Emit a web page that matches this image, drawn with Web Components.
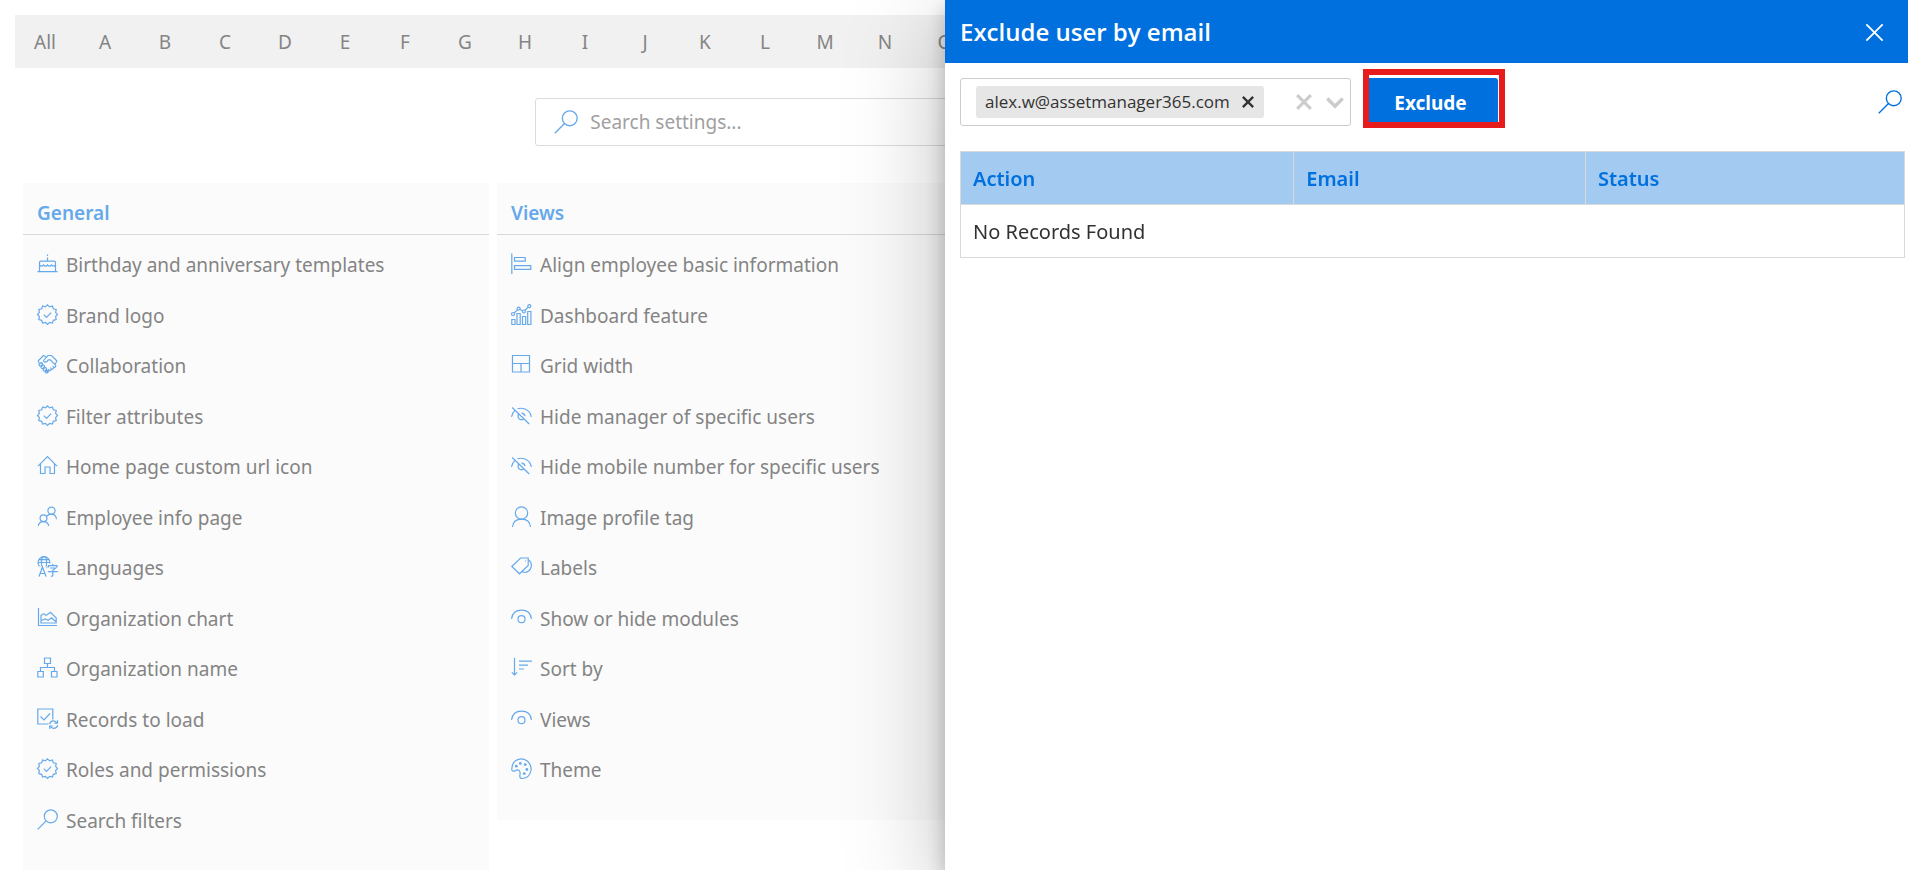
<!DOCTYPE html>
<html lang="en">
<head>
<meta charset="utf-8">
<title>Settings</title>
<style>
  html, body { margin: 0; height: 100%; }
  body {
    overflow: hidden;
    background: #fff;
    color: #848484;
    font: 19px/28px "Noto Sans", "Open Sans", sans-serif;
    --accent: #0070de;
    --accent-muted: #66a9eb;
    --line: #d9d9d9;
  }
</style>
</head>
<body>
<settings-page>
  <alphabet-bar letters="All A B C D E F G H I J K L M N O"></alphabet-bar>
  <settings-search placeholder="Search settings..."></settings-search>
  <card-grid>
    <settings-card heading="General">
      <settings-item icon="cake">Birthday and anniversary templates</settings-item>
      <settings-item icon="badge">Brand logo</settings-item>
      <settings-item icon="handshake">Collaboration</settings-item>
      <settings-item icon="badge">Filter attributes</settings-item>
      <settings-item icon="home">Home page custom url icon</settings-item>
      <settings-item icon="people">Employee info page</settings-item>
      <settings-item icon="languages">Languages</settings-item>
      <settings-item icon="areachart">Organization chart</settings-item>
      <settings-item icon="hierarchy">Organization name</settings-item>
      <settings-item icon="records">Records to load</settings-item>
      <settings-item icon="badge">Roles and permissions</settings-item>
      <settings-item icon="search">Search filters</settings-item>
    </settings-card>
    <settings-card heading="Views">
      <settings-item icon="align">Align employee basic information</settings-item>
      <settings-item icon="dashboard">Dashboard feature</settings-item>
      <settings-item icon="grid">Grid width</settings-item>
      <settings-item icon="hide">Hide manager of specific users</settings-item>
      <settings-item icon="hide">Hide mobile number for specific users</settings-item>
      <settings-item icon="person">Image profile tag</settings-item>
      <settings-item icon="labels">Labels</settings-item>
      <settings-item icon="view">Show or hide modules</settings-item>
      <settings-item icon="sort">Sort by</settings-item>
      <settings-item icon="view">Views</settings-item>
      <settings-item icon="palette">Theme</settings-item>
    </settings-card>
  </card-grid>
</settings-page>

<side-panel heading="Exclude user by email">
  <panel-toolbar>
    <email-picker value="alex.w@assetmanager365.com"></email-picker>
    <action-button highlighted>Exclude</action-button>
  </panel-toolbar>
  <records-table columns="Action,Email,Status" empty="No Records Found"></records-table>
</side-panel>

<script>
const ICONS = {
  cake: '<path d="M.5 18.700h20M2.500 18.500V9.500q0-1.300 1.300-1.300h13.400q1.300 0 1.300 1.300v9M2.500 12q2 2.400 4 0 2 2.400 4 0 2 2.400 4 0 2 2.400 4 0M10.500 8V4.500M10.500 1.500v1.500"/>',
  badge: '<path d="M10.500.8l2.100 2.100 2.800-.9.900 2.800 2.900.7-.6 2.900 1.900 2.100-1.900 2.200.6 2.900-2.900.7-.9 2.800-2.800-.8-2.100 2.100-2.100-2.100-2.800.8-.9-2.800-2.900-.7.6-2.900L.5 10.500l1.900-2.100-.6-2.900 2.900-.7.900-2.800 2.800.900z"/><path d="M6.800 10.600l2.700 2.700 4.600-4.600"/>',
  handshake: '<path d="M1 7l5.500-5.500 2.500 1.200M20 7l-5.500-5.500H11L6.800 6.200q-.5 2 1.500 2 1.500-.2 3-2.400h2l5.200 5.400q.8 1.200-.4 2-.8.4-1.700-.2.6 1.400-.6 2-.8.5-1.800-.4.4 1.600-.9 2-.8.2-1.600-.6 0 1.600-1.500 1.700L9 17.500M1 7l1.600 2.500M20 7l-2 3.200"/><path d="M2.200 10.200l1.600-1.500q1.800-.2 1.600 1.700l-1.600 1.700q-2.200 0-1.600-1.900zM4.200 12.800l1.700-1.700q1.800-.2 1.600 1.700l-1.600 1.700q-2.200 0-1.700-1.700zM6.200 15.300l1.700-1.700q1.800-.2 1.600 1.700L7.900 17q-2.200 0-1.700-1.700zM8.200 17.600l1.400-1.400q1.800 0 1.600 1.700l-1 1q-2 .3-2-1.300z"/>',
  home: '<path d="M1 11.200L10.500 1.700 20 11.200M3.500 9v9.500H8V12h5v6.500h4.500V9"/>',
  people: '<circle cx="14.500" cy="4.700" r="3.600"/><circle cx="6.500" cy="12.200" r="3.400"/><path d="M9.800 10q1.800-1.800 4.700-1.800 4.500.3 5 5M1.200 20q.8-4.400 5.300-4.400T11.800 20"/>',
  languages: '<circle cx="7" cy="6.500" r="5.900"/><ellipse cx="7" cy="6.500" rx="2.600" ry="5.900"/><path d="M1.200 6.500h11.600M2 3.700h10"/><path fill="#fbfbfb" stroke="none" d="M1.500 10.500h8v10h-8zM10.500 7.500h10v13h-10z"/><path d="M2 20.500l3.500-9.500L9 20.500M3.300 17.500h4.400M11.500 11.500V9.700h8.500v1.800M15.800 7.800v1.800M13 12h5.500l-2.700 2.200v5q0 1.300-2 1M10.800 15.700h10"/>',
  areachart: '<path d="M1.500 1v17.500H20M4 16V8.500q3-3.300 5 0L13.500 5.300 19.200 11v5zM4.200 13.500l4-1.500 3 1.200 3.300-2.400 4.500 4"/>',
  hierarchy: '<path d="M7.500 1h6v5.500h-6zM.8 14.500h5.500V20H.8zM14.500 14.500H20V20h-5.500zM10.500 6.500v4M3.500 14.300v-3.800h14v3.800"/>',
  records: '<path d="M11.500 16H.8V1h15v10.500M3.500 8.500l3.500 3.500 6-6.500"/><path d="M12.500 16q1-3.300 4-3.200 2.200.1 3.500 2.200M20.500 12.200v3h-3M20.800 17.200q-1 3-4 3.200-2.300 0-3.500-2.100M12.700 21v-3h3"/>',
  search: '<circle cx="13.800" cy="7.300" r="6.500"/><path d="M9.200 11.900L.7 20.400"/>',
  align: '<path d="M.8.500v20.500M3.500 4.500h10.700v3.700H3.500zM3.500 12.700h16.300v3.600H3.500z"/>',
  dashboard: '<path d="M.8 15.500h3.200v5H.8zM6 9.500h3.200v11H6zM11.500 12.500h3.200v8h-3.200zM16.700 7.500h3.200v13h-3.200zM3.200 9l3.200-3.200M8.800 5.200l3 1.800M13.800 6.500l3.600-3.700"/><circle cx="2" cy="10" r="1.500"/><circle cx="7.600" cy="4.600" r="1.500"/><circle cx="12.900" cy="7.500" r="1.500"/><circle cx="18.300" cy="2.200" r="1.500"/>',
  grid: '<path d="M1.500 1.500h17v16.500h-17zM1.500 9.500h17M10 9.500v8.500"/>',
  hide: '<path d="M1.200 2.500l17 16.500M.5 11.800q.6-4 3.400-6.200M6.500 3.800Q10 2.600 14 4q5.500 2.200 6.300 7.800M7.500 9.300q-1.200 2.800.8 4.600 2.200 1.500 4.500 0M10.500 8.200q2.800 0 3.600 3"/>',
  person: '<circle cx="10.500" cy="7" r="6.200"/><path d="M1.500 21q.8-7.800 9-7.800t9 7.800"/>',
  labels: '<path d="M.8 10.500L9.600 2h7.600v7.400L8.500 17.800zM17.200 3.800q4 2.500 3 7.200-1.500 4.700-6.200 5.500l-3-.8"/><path d="M14 5h1"/>',
  view: '<path d="M.5 11.800Q1.800 3.300 10.500 3.200t10 8.600"/><circle cx="10.500" cy="12.200" r="3.500"/>',
  sort: '<path d="M3.500.800v17M.8 15.300l2.700 2.700 2.700-2.700M8 4.200h13M8 8.200h9M8 12h5"/>',
  palette: '<path d="M.8 11.800Q.5 5.500 4.900 2.600 10.500-1 16.300 3q4.700 4.300 3.700 9.500-1.600 7.500-8.500 8-3 0-2.700-3 .8-2.800-.3-4.500-1.300-1.700-3.800-.6-2 1.200-3 .6-.8-.4-.9-1.200z"/><g fill="currentColor" stroke="none"><circle cx="5.300" cy="8.200" r="1.400"/><circle cx="9.300" cy="5.400" r="1.400"/><circle cx="14.300" cy="6.600" r="1.400"/><circle cx="15.900" cy="11.500" r="1.400"/><circle cx="13.300" cy="15.600" r="1.400"/></g>',
  close: '<path d="M1.500 1.500l18 18M19.500 1.500l-18 18"/>',
  chevron: '<path d="M1.500 6.500l9 9 9-9"/>'
};

class BaseElement extends HTMLElement {
  connectedCallback() {
    if (this.shadowRoot) return;
    const root = this.attachShadow({ mode: 'open' });
    root.innerHTML = `<style>:host,*{box-sizing:border-box}button,input{font:inherit;color:inherit}button{cursor:pointer}${this.constructor.css}</style>${this.render()}`;
  }
  attr(name) { return this.getAttribute(name) || ''; }
  render() { return '<slot></slot>'; }
}

class IconGlyph extends BaseElement {
  static css = `
    :host { display: inline-block; flex: none; width: 21px; height: 21px; }
    svg { display: block; width: 100%; height: 100%; fill: none; stroke: currentColor; stroke-width: var(--icon-stroke, 1.2); overflow: visible; }`;
  render() { return `<svg viewBox="0 0 21 21" aria-hidden="true">${ICONS[this.attr('name')]}</svg>`; }
}

class SettingsPage extends BaseElement {
  static css = `:host { display: block; padding-top: 15px; }`;
}

class AlphabetBar extends BaseElement {
  static css = `
    :host { display: block; margin: 0 15px; background: #f1f1f1; }
    nav { display: flex; height: 53px; align-items: center; }
    a { width: 60px; text-align: center; color: inherit; text-decoration: none; }`;
  render() {
    const links = this.attr('letters').split(' ').map(l => `<a href="#${l}">${l}</a>`).join('');
    return `<nav aria-label="Filter by letter">${links}</nav>`;
  }
}

class SettingsSearch extends BaseElement {
  static css = `
    :host { display: block; width: calc(44% - 2px); margin: 30px auto 37px; }
    label { display: flex; align-items: center; gap: 12px; height: 48px; padding: 0 18px; border: 1px solid #dcdcdc; border-radius: 3px; color: var(--accent-muted); }
    icon-glyph { width: 24px; height: 24px; }
    input { flex: 1; min-width: 0; padding: 0; border: 0; outline: 0; background: none; color: #848484; }
    input::placeholder { color: #a0a0a0; opacity: 1; }`;
  render() {
    return `<label><icon-glyph name="search"></icon-glyph><input type="text" aria-label="Search settings" placeholder="${this.attr('placeholder')}"></label>`;
  }
}

class CardGrid extends BaseElement {
  static css = `:host { display: grid; grid-template-columns: repeat(4, 1fr); gap: 8px; align-items: start; margin: 0 -3px 0 23px; }`;
}

class SettingsCard extends BaseElement {
  static css = `
    :host { display: block; background: #fbfbfb; padding-bottom: 25px; }
    h2 { margin: 0 0 5px; height: 52px; padding: 8px 14px 0; border-bottom: 1px solid var(--line); font-size: 19px; line-height: 44px; font-weight: 600; color: var(--accent-muted); }
    ::slotted(settings-item) { height: 50px; }
    ::slotted(settings-item:nth-child(even)) { height: 51px; }`;
  render() { return `<h2>${this.attr('heading')}</h2><slot></slot>`; }
}

class SettingsItem extends BaseElement {
  static css = `
    :host { display: flex; align-items: center; padding: 0 14px; }
    a { display: flex; align-items: center; gap: 8px; color: inherit; text-decoration: none; white-space: nowrap; }
    icon-glyph { color: var(--accent-muted); margin-bottom: 3px; }`;
  render() { return `<a href="#"><icon-glyph name="${this.attr('icon')}"></icon-glyph><slot></slot></a>`; }
}

class SidePanel extends BaseElement {
  static css = `
    :host { position: fixed; top: 0; right: 0; bottom: 0; width: calc(50% + 9px); background: #fff; color: #323130;
      box-shadow: 0 26px 92px rgba(0,0,0,.26), 0 8px 20px rgba(0,0,0,.22); }
    header { display: flex; align-items: center; justify-content: space-between; height: 63px; padding: 0 24px 0 15px; background: var(--accent); color: #fff; }
    h1 { margin: 0; font-size: 24px; line-height: 32px; font-weight: 600; font-family: "Open Sans", sans-serif; }
    header button { display: flex; padding: 2px 0 0; border: 0; background: none; --icon-stroke: 2; }
    header icon-glyph { width: 19px; height: 19px; }
    .body { padding: 15px 3px 0 15px; }`;
  render() {
    return `<header><h1>${this.attr('heading')}</h1><button aria-label="Close"><icon-glyph name="close"></icon-glyph></button></header><div class="body"><slot></slot></div>`;
  }
}

class PanelToolbar extends BaseElement {
  static css = `
    :host { display: flex; align-items: center; gap: 12px; margin-bottom: 25px; }
    button { display: flex; margin: 0 3px 0 auto; padding: 0; border: 0; background: none; color: var(--accent); }
    icon-glyph { width: 24px; height: 24px; }`;
  render() { return `<slot></slot><button aria-label="Search"><icon-glyph name="search"></icon-glyph></button>`; }
}

class EmailPicker extends BaseElement {
  static css = `
    :host { display: flex; align-items: center; width: 391px; height: 48px; padding: 0 6px 0 15px; border: 1px solid #ccc; border-radius: 3px; }
    .chip { display: flex; align-items: center; gap: 12px; height: 32px; padding: 0 10px 0 9px; border-radius: 3px; background: #e6e6e6; color: #333; font-size: 17px; font-family: "Open Sans", sans-serif; }
    input { flex: 1; width: 0; min-width: 0; padding: 0; border: 0; outline: 0; background: none; }
    button { display: flex; padding: 0; border: 0; background: none; --icon-stroke: 4; }
    .chip icon-glyph { width: 12px; height: 12px; }
    .tools { display: flex; align-items: center; gap: 14px; color: #ccc; }
    .tools icon-glyph { width: 16px; height: 16px; }
    .tools icon-glyph[name="chevron"] { width: 18px; height: 18px; }`;
  render() {
    return `<span class="chip">${this.attr('value')}<button aria-label="Remove"><icon-glyph name="close"></icon-glyph></button></span>
      <input type="text" aria-label="Email"><span class="tools"><button aria-label="Clear all"><icon-glyph name="close"></icon-glyph></button>
      <button aria-label="Open list"><icon-glyph name="chevron"></icon-glyph></button></span>`;
  }
}

class ActionButton extends BaseElement {
  static css = `
    :host { display: block; position: relative; }
    button { display: block; width: 135px; height: 48px; padding: 2px 0 0; border: 0; border-radius: 3px; background: var(--accent); color: #fff; font-weight: 700; }
    :host([highlighted])::after { content: ""; position: absolute; inset: -9px -7px -2px 0; border: 6px solid #e81b1c; pointer-events: none; }`;
  render() { return '<button><slot></slot></button>'; }
}

class RecordsTable extends BaseElement {
  static css = `
    :host { display: block; font-size: 20px; }
    table { width: 100%; border-collapse: collapse; table-layout: fixed; }
    th, td { height: 53px; padding: 2px 12px 0; border: 1px solid var(--line); text-align: left; }
    th { background: #a3caf1; color: var(--accent); font-weight: 600; }
    th:nth-child(1) { width: 35.3%; }
    th:nth-child(2) { width: 30.9%; }`;
  render() {
    const cols = this.attr('columns').split(',');
    return `<table><thead><tr>${cols.map(c => `<th scope="col">${c}</th>`).join('')}</tr></thead>
      <tbody><tr><td colspan="${cols.length}">${this.attr('empty')}</td></tr></tbody></table>`;
  }
}

customElements.define('icon-glyph', IconGlyph);
customElements.define('settings-page', SettingsPage);
customElements.define('alphabet-bar', AlphabetBar);
customElements.define('settings-search', SettingsSearch);
customElements.define('card-grid', CardGrid);
customElements.define('settings-card', SettingsCard);
customElements.define('settings-item', SettingsItem);
customElements.define('side-panel', SidePanel);
customElements.define('panel-toolbar', PanelToolbar);
customElements.define('email-picker', EmailPicker);
customElements.define('action-button', ActionButton);
customElements.define('records-table', RecordsTable);
</script>
</body>
</html>
